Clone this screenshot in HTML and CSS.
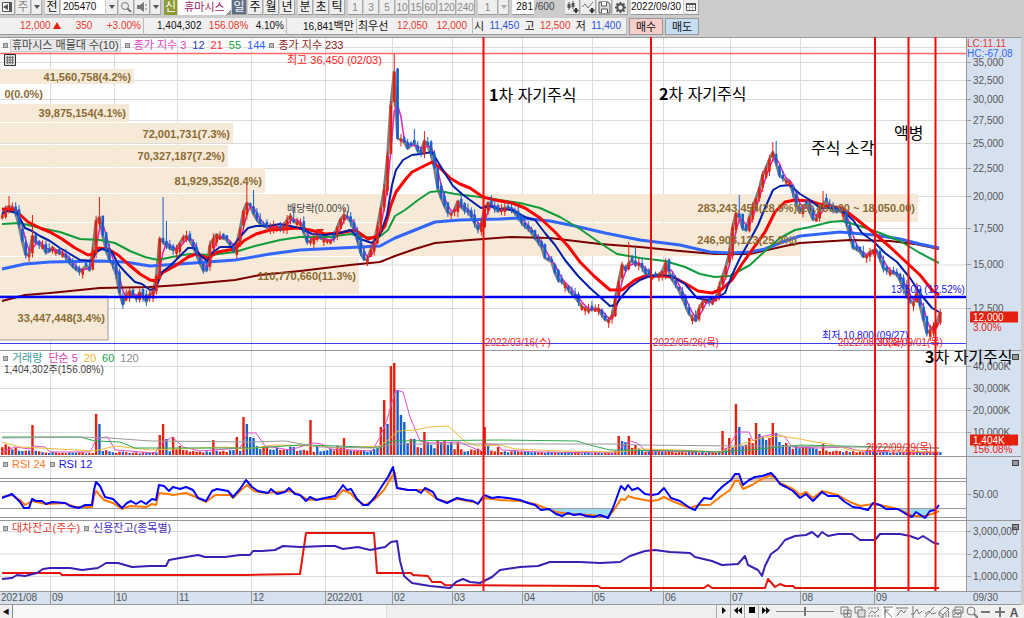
FILE: index.html
```html
<!DOCTYPE html>
<html lang="ko">
<head>
    <meta charset="UTF-8">
    <meta name="viewport" content="width=device-width, initial-scale=1">
    <title>휴마시스 205470</title>
    <link rel="stylesheet" href="styles.css">
</head>
<body>
    <div class="wrapper">
        <div class="toolbar">
            <button class="btn icon w15" aria-label="패널"><svg width="12" height="12" viewBox="0 0 12 12"><path d="M1.500 1.500h9v9h-9z" fill="#fff" stroke="#555"/><path d="M8 1h3v10H8zM2 6l5-3v6z" fill="#555"/></svg></button>
            <button class="btn w15 muted">주</button>
            <button class="btn w10 arrow gap-after" aria-label="주기 목록"></button>
            <button class="btn w15">전</button>
            <input class="code" type="text" value="205470" aria-label="종목코드">
            <button class="btn w12 arrow" aria-label="종목 목록"></button>
            <button class="btn icon w15" aria-label="검색"><svg width="12" height="12" viewBox="0 0 12 12"><circle cx="5" cy="5" r="3.5" fill="none" stroke="#777"/><path d="M7.500 7.500L11 11" stroke="#777" stroke-width="2"/></svg></button>
            <button class="btn icon w15" aria-label="소리"><svg width="12" height="12" viewBox="0 0 12 12"><path d="M1 4h3l4-3v10L4 8H1z" fill="#777"/><path d="M10 3v2M10 7v2" stroke="#777"/></svg></button>
            <button class="btn w10 arrow gap-after" aria-label="소리 설정"></button>
            <span class="credit">신</span>
            <span class="stock">휴마시스</span>
            <button class="btn w15 active">일</button>
            <button class="btn w15">주</button>
            <button class="btn w15">월</button>
            <button class="btn w15 gap-after">년</button>
            <button class="btn w15">분</button>
            <button class="btn w15">초</button>
            <button class="btn w15 gap-after">틱</button>
            <button class="btn w15 num">1</button>
            <button class="btn w15 num">3</button>
            <button class="btn w15 num">5</button>
            <button class="btn w13 num">10</button>
            <button class="btn w13 num">15</button>
            <button class="btn w13 num">60</button>
            <button class="btn w18 num">120</button>
            <button class="btn w18 num gap-after">240</button>
            <button class="btn w20 num">1</button>
            <button class="btn w10 arrow pale gap-after" aria-label="틱 목록"></button>
            <input class="count" type="text" value="281" aria-label="봉 수">
            <span class="total">/600</span>
            <button class="btn icon w15" aria-label="봉 추가"><svg width="13" height="13" viewBox="0 0 13 13"><path d="M3 1v8M7 0v8" stroke="#555"/><path d="M1.500 3h3v4h-3zM5.500 2h3v4h-3z" fill="#555"/><path d="M10 7v5M7.500 9.500h5" stroke="#333" stroke-width="2"/></svg></button>
            <button class="btn icon w15" aria-label="지표 추가"><svg width="13" height="13" viewBox="0 0 13 13"><path d="M0 6l3-3 3 4 5-6" stroke="#777" fill="none"/><path d="M10 7v5M7.500 9.500h5" stroke="#333" stroke-width="2"/></svg></button>
            <button class="btn icon w15" aria-label="저장"><svg width="13" height="13" viewBox="0 0 13 13"><path d="M1 1h9l2 2v9H1z" fill="#ddd" stroke="#555"/><path d="M3.500 1v4h5V1M3.500 12V8h6v4" fill="#fff" stroke="#555"/></svg></button>
            <button class="btn icon w15 gap-after" aria-label="설정"><svg width="13" height="13" viewBox="0 0 13 13"><circle cx="6.500" cy="6.500" r="3.200" fill="none" stroke="#555" stroke-width="2"/><path d="M6.500 1v2M6.500 10v2M1 6.500h2M10 6.500h2M2.500 2.500l1.500 1.500M9 9l1.500 1.500M2.500 10.500L4 9M9 4l1.500-1.500" stroke="#555" stroke-width="2"/></svg></button>
            <input class="date" type="text" value="2022/09/30" aria-label="기준일">
            <button class="btn icon w15" aria-label="달력"><svg width="12" height="12" viewBox="0 0 12 12"><path d="M1.500 2.500h9v7h-9z" fill="#fff" stroke="#555"/><path d="M1 2h10v2H1z" fill="#555"/><path d="M4.500 4v5M7.500 4v5M2 6.500h8" stroke="#bbb"/></svg></button>
        </div>

        <div class="quote">
            <div class="cell price"><span class="up">12,000 <i class="tri"></i></span><span class="up">350</span><span class="up">+3.00%</span></div>
            <div class="cell volume"><span>1,404,302</span><span class="up">156.08%</span><span>4.10%</span></div>
            <div class="cell amount"><span>16,841<small>백만</small></span></div>
            <div class="cell best"><small>최우선</small><span class="up">12,050</span><span class="up">12,000</span></div>
            <div class="cell ohl"><small>시</small><span class="down">11,450</span><small>고</small><span class="up">12,500</span><small>저</small><span class="down">11,400</span></div>
            <button class="trade buy">매수</button>
            <button class="trade sell">매도</button>
        </div>

        <div class="chart">
            <section class="panel panel-price" id="price">
                <div class="plot">
                    <svg class="canvas" viewBox="0 37 966 313" preserveAspectRatio="none"></svg>
                    <div class="legend">
                        <i class="dot"></i><span class="boxed">휴마시스 매물대 수(10)</span>
                        <i class="dot"></i><span class="c-magenta">종가 지수 3</span><span class="c-navy">12</span><span class="c-red">21</span><span class="c-green">55</span><span class="c-blue">144</span>
                        <i class="dot"></i><span class="c-maroon">종가 지수 233</span>
                    </div>
                    <svg class="grid-icon" width="12" height="12" viewBox="0 0 12 12"><path d="M.5.5h11v11H.5z" fill="#ddd" stroke="#333"/><path d="M3.500 2v8M6 2v8M8.500 2v8M2 3.500h8M2 6h8M2 8.500h8" stroke="#777"/></svg>
                </div>
                <div class="axis"></div>
            </section>
            <section class="panel panel-volume" id="volume">
                <div class="plot">
                    <svg class="canvas" viewBox="0 350 966 106" preserveAspectRatio="none"></svg>
                    <div class="legend">
                        <i class="dot"></i><span class="c-teal">거래량</span><span class="c-magenta">단순 5</span><span class="c-yellow">20</span><span class="c-green">60</span><span class="c-gray">120</span>
                    </div>
                    <div class="sub-legend">1,404,302주(156.08%)</div>
                </div>
                <div class="axis"><button class="close" aria-label="거래량 닫기"></button></div>
            </section>
            <section class="panel panel-rsi" id="rsi">
                <div class="plot">
                    <svg class="canvas" viewBox="0 456 966 64" preserveAspectRatio="none"></svg>
                    <div class="legend">
                        <i class="dot"></i><span class="c-orange">RSI 24</span><i class="dot"></i><span class="c-rsi">RSI 12</span>
                    </div>
                </div>
                <div class="axis"><button class="close" aria-label="RSI 닫기"></button></div>
            </section>
            <section class="panel panel-credit" id="credit">
                <div class="plot">
                    <svg class="canvas" viewBox="0 520 966 71" preserveAspectRatio="none"></svg>
                    <div class="legend">
                        <i class="dot"></i><span class="c-up">대차잔고(주수)</span><i class="dot"></i><span class="c-purple">신용잔고(종목별)</span>
                    </div>
                </div>
                <div class="axis"><button class="close" aria-label="잔고 닫기"></button></div>
            </section>
        </div>

        <div class="timeline">
            <div class="months" id="months"></div>
            <div class="last-date">09/30</div>
        </div>

        <div class="bottom">
            <button class="scroll-left" aria-label="왼쪽으로">◀</button>
            <div class="track"><div class="thumb"></div></div>
            <button class="play" aria-label="재생"><svg width="10" height="9" viewBox="0 0 10 9"><path d="M3 1l4 3.500L3 8z"/></svg></button>
            <button class="play" aria-label="뒤로"><svg width="10" height="9" viewBox="0 0 10 9"><path d="M5 1L1 4.500 5 8zM9 1L5 4.500 9 8z"/></svg></button>
            <button class="play" aria-label="정지"><svg width="10" height="9" viewBox="0 0 10 9"><path d="M2 1h6v6H2z"/></svg></button>
            <button class="play" aria-label="앞으로"><svg width="10" height="9" viewBox="0 0 10 9"><path d="M1 1l4 3.500L1 8zM5 1l4 3.500L5 8z"/></svg></button>
            <input class="speed" type="range" min="0" max="100" value="50" aria-label="속도">
            <div class="tools">
                <button aria-label="복사"><svg viewBox="0 0 12 12"><path d="M1 1h7v7H1zM4 4h7v7H4zM7.500 5v5M5 7.500h5"/></svg></button>
                <button aria-label="겹치기"><svg viewBox="0 0 12 12"><path d="M1 1h7v6H1z"/><path d="M4 4h7v7H4z" fill="#ddd"/></svg></button>
                <button aria-label="보조선"><svg viewBox="0 0 12 12"><path d="M0 2h12M0 10h12" stroke-dasharray="2 1"/><path d="M1 8l3-3 3 2 4-4"/></svg></button>
                <button class="on" aria-label="십자선"><svg viewBox="0 0 12 12"><path d="M1 1h10M3 1v11M3 4l7 7M3 4h4M3 4v4"/></svg></button>
                <button aria-label="추세"><svg viewBox="0 0 12 12"><path d="M0 2h12M1 10l4-6 3 3 2-3"/></svg></button>
                <button aria-label="수직선"><svg viewBox="0 0 12 12"><path d="M3 0v12M1 8h3l3-5 2 5 3-3"/></svg></button>
                <button aria-label="그리기"><svg viewBox="0 0 12 12"><path d="M1 11L10 1M1 8l4-3 3 3 4-1"/></svg></button>
                <button aria-label="지우개"><svg viewBox="0 0 12 12"><path d="M1 6l6-5 4 2-6 6zM1 6v3l4 3V9M8 7v4M10.500 5v6"/></svg></button>
                <button aria-label="창"><svg viewBox="0 0 12 12"><path d="M3 1h8v6H3zM1 4h8v7H1zM2 9l2-2 2 2 2-3"/></svg></button>
                <button aria-label="확대경"><svg viewBox="0 0 12 12"><circle cx="5" cy="5" r="4"/><path d="M8 8l4 4" stroke-width="2"/></svg></button>
                <button aria-label="축소"><svg viewBox="0 0 12 12"><path d="M1 6h9" stroke-width="2"/></svg></button>
                <button aria-label="확대"><svg viewBox="0 0 12 12"><path d="M1 6h10M6 1v10" stroke-width="2"/></svg></button>
                <button class="letter" aria-label="글자">A</button>
            </div>
        </div>
    </div>
    <script src="chart.js"></script>
</body>
</html>
```
FILE: styles.css
```css
html, body {
    height: 100%;
}

body {
    margin: 0;
    overflow: hidden;
    background-color: #ccc;
    color: #111;
    font-family: "Liberation Sans", "Noto Sans CJK KR", sans-serif;
    font-size: 10px;
    line-height: 14px;
}

button, input {
    box-sizing: border-box;
    margin: 0;
    padding: 0;
    border: 0;
    border-radius: 0;
    font: inherit;
    color: inherit;
}

.wrapper {
    height: 100%;
    display: flex;
    flex-direction: column;
}

/* top bars */
.toolbar {
    display: flex;
    gap: 1px;
    height: 15px;
    padding-bottom: 3px;
    white-space: nowrap;
}

.btn {
    flex-shrink: 0;
    overflow: hidden;
    background-color: #eee;
    border-right: 1px solid #aaa;
    border-bottom: 1px solid #999;
    text-align: center;
    font-size: 12px;
    line-height: 13px;
}

    .btn.icon {
        display: flex;
        align-items: center;
        justify-content: center;
    }

    .btn svg {
        flex-shrink: 0;
    }

.w10 { width: 10px; }
.w12 { width: 12px; }
.w13 { width: 13px; }
.w15 { width: 15px; }
.w18 { width: 18px; }
.w20 { width: 20px; }

.gap-after {
    margin-right: 2px;
}

.muted, .num {
    color: #888;
}

    .btn.num {
        font-size: 10px;
    }

.arrow::after {
    content: "";
    display: block;
    width: 0;
    margin: 0 auto;
    border: 3px solid transparent;
    border-top: 4px solid #555;
    border-bottom: 0;
}

    .arrow.pale::after {
        border-top-color: #aaa;
    }

.active {
    background-color: #5f6f86;
    color: #fff;
}

.code, .count, .date {
    background-color: #fff;
    border-bottom: 1px solid #999;
}

.code {
    width: 44px;
    padding-left: 2px;
}

.count {
    width: 22px;
    padding-right: 1px;
    text-align: right;
}

.total {
    width: 29px;
    color: #444;
}

.date {
    width: 52px;
}

.credit {
    width: 13px;
    background-color: #8e9a33;
    color: #fff;
    font-size: 12px;
    text-align: center;
}

.stock {
    width: 53px;
    background: linear-gradient(135deg, #fff 92%, #999 92%);
    color: #9b1b5e;
    font-size: 11px;
    text-align: center;
}

.quote {
    display: flex;
    height: 17px;
    padding-bottom: 2px;
    line-height: 16px;
    white-space: nowrap;
}

.cell {
    box-sizing: border-box;
    display: flex;
    justify-content: space-between;
    background-color: #f0f0f0;
    border-right: 1px solid #bbb;
    border-bottom: 1px solid #999;
}

    .cell small {
        font-size: 11px;
    }

.price { width: 144px; padding: 0 2px 0 20px; }
.volume { width: 143px; padding: 0 2px 0 13px; }
.amount { width: 70px; padding-left: 16px; }
.best { width: 116px; padding: 0 5px 0 1px; }
.ohl { width: 154px; padding: 0 5px 0 1px; }

.up { color: #e8392b; }
.down { color: #2a55d4; }

.tri {
    display: inline-block;
    border: 4px solid transparent;
    border-top: 0;
    border-bottom: 7px solid #e5200c;
}

.trade {
    width: 34px;
    margin-left: 2px;
    border: 1px solid #999;
    font-size: 11px;
    line-height: 14px;
}

.buy { background-color: #f6cdc9; }
.sell { background-color: #c5dcf3; }

/* chart panels */
.chart {
    flex: 1 1 0;
    min-height: 0;
    display: flex;
    flex-direction: column;
    margin-right: 3px;
    background-color: #fff;
}

.panel {
    position: relative;
    min-height: 0;
    display: flex;
}

.panel-price { flex: 313 1 0; }
.panel-volume { flex: 106 1 0; }
.panel-rsi { flex: 64 1 0; }
.panel-credit { flex: 71 1 0; }

.plot {
    position: relative;
    flex: 1 1 0;
}

.canvas {
    position: absolute;
    width: 100%;
    height: 100%;
}

.axis {
    box-sizing: border-box;
    position: relative;
    width: 55px;
    background-color: #d6e1ef;
    border-left: 1px solid #999;
    border-top: 1px solid #999;
    color: #555;
}

.legend {
    position: relative;
    display: flex;
    align-items: center;
    gap: 6px;
    height: 14px;
    padding: 1px 0 0 5px;
    font-size: 11px;
    white-space: nowrap;
}

.sub-legend {
    position: relative;
    padding-left: 4px;
    line-height: 10px;
    color: #444;
}

.dot {
    width: 3px;
    height: 3px;
    margin: 0 -2px;
    border: 1px solid #888;
    background-color: #bbb;
}

.boxed {
    margin-left: -2px;
    padding: 0 1px;
    background-color: #e8e8e8;
    border: 1px solid #ccc;
    line-height: 11px;
    color: #444;
}

.c-magenta { color: #e040c0; }
.c-navy { color: #2340b8; }
.c-red { color: #ff1c1c; }
.c-green { color: #12a140; }
.c-blue { color: #3366ff; }
.c-maroon { color: #8b1a1a; }
.c-teal { color: #3a9a9a; }
.c-yellow { color: #f0b428; }
.c-gray { color: #888; }
.c-orange { color: #ff7a1a; }
.c-rsi { color: #1414f0; }
.c-up { color: #e8392b; }
.c-purple { color: #4a2fc0; }
.c-dark { color: #444; }

.grid-icon {
    position: absolute;
    left: 4px;
    top: 17px;
}

/* labels over the plot, placed by chart.js */
.label {
    position: absolute;
    white-space: nowrap;
    line-height: 14px;
    transform: translateY(-50%);
}

    .label.profile {
        color: #8b6b33;
        font-size: 11px;
        font-weight: bold;
        transform: translate(-100%, -50%);
    }

    .label.peak {
        font-size: 11px;
    }

    .label.note {
        z-index: 2;
        color: #000;
        font-family: "Noto Sans CJK KR", sans-serif;
        font-size: 16px;
    }

    .label.tick {
        left: 6px;
    }

        .label.tick::before {
            content: "";
            position: absolute;
            left: -6px;
            top: 6px;
            width: 4px;
            border-top: 1px solid #999;
        }

    .label.badge {
        left: 3px;
        right: 3px;
        padding-left: 3px;
        line-height: 11px;
        background-color: #e5200c;
        color: #fff;
    }

    .label.rate {
        left: 6px;
        color: #e5200c;
    }

    .label.limit {
        left: 0;
    }

.close {
    position: absolute;
    right: 2px;
    top: 3px;
    width: 7px;
    height: 6px;
    background-color: #999;
    border: 1px solid #444;
}

/* shapes */
.grid { stroke: #dcdcdc; stroke-width: 1; }
.frame { stroke: #999; stroke-width: 1; }
.profile-bar { fill: #f6e9d7; }
.line { fill: none; stroke-linejoin: round; }
.event { stroke: #f50a0a; stroke-width: 2; }
.rise { fill: #e5200c; }
.fall { fill: #1560d0; }
.over { fill: #f8c8a0; }
.under { fill: #9edcf5; }

/* time axis and bottom bar */
.timeline {
    box-sizing: border-box;
    display: flex;
    height: 14px;
    margin-right: 3px;
    background-color: #d6e1ef;
    border-top: 1px solid #999;
    border-bottom: 1px solid #999;
    line-height: 12px;
    color: #555;
}

.months {
    position: relative;
    flex: 1 1 0;
}

.month {
    position: absolute;
    padding-left: 1px;
    border-left: 1px solid #999;
}

    .month:first-child {
        border-left: 0;
    }

.last-date {
    width: 48px;
    padding-left: 7px;
}

.bottom {
    display: flex;
    height: 13px;
    background-color: #f0f0f0;
}

    .bottom button {
        background-color: #f0f0f0;
    }

.scroll-left {
    width: 13px;
    border-right: 1px solid #888;
    font-size: 7px;
}

.track {
    flex: 1 1 0;
    background-color: #f8f8f8;
}

.thumb {
    height: 100%;
    margin-left: 53%;
    background-color: #efefef;
    border-left: 1px solid #ddd;
}

.bottom .play {
    width: 14px;
    border-left: 1px solid #aaa;
    line-height: 10px;
}

.bottom .speed {
    width: 58px;
    height: 13px;
    margin: 0 6px 0 4px;
    appearance: none;
    background: linear-gradient(#888, #888) 0 6px / 100% 1px no-repeat;
}

    .speed::-webkit-slider-thumb {
        appearance: none;
        width: 2px;
        height: 9px;
        background-color: #777;
    }

.tools {
    display: flex;
    gap: 2px;
    margin-right: 4px;
}

    .tools button {
        width: 12px;
        height: 13px;
        padding-top: 1px;
    }

    .tools button.on {
        background-color: #fff;
    }

    .tools svg {
        display: block;
        width: 12px;
        height: 12px;
        fill: none;
        stroke: #777;
    }

    .tools .letter {
        font: bold 12px "Liberation Sans", sans-serif;
        color: #555;
    }
```
FILE: chart.js
```js
const WIDTH = 966;
const BARS = 281;
const STEP = 3.35;
const NS = 'http://www.w3.org/2000/svg';

// "x,y x,y ..." -> [[x, y], ...]
const pts = (s) => s.trim().split(/\s+/).map((p) => p.split(',').map(Number));

function sample(points, x) {
    if (x <= points[0][0]) return points[0][1];
    for (let i = 1; i < points.length; i++) {
        const [x0, y0] = points[i - 1];
        const [x1, y1] = points[i];
        if (x <= x1) return y0 + (y1 - y0) * (x - x0) / (x1 - x0);
    }
    return points[points.length - 1][1];
}

let seed = 7;
function rnd() {
    seed = (seed * 16807) % 2147483647;
    return seed / 2147483647;
}

function add(svg, tag, attrs) {
    const el = document.createElementNS(NS, tag);
    Object.keys(attrs).forEach((k) => el.setAttribute(k, attrs[k]));
    svg.appendChild(el);
    return el;
}

const canvas = (id) => document.querySelector('#' + id + ' .canvas');
const hline = (svg, y, cls) => add(svg, 'path', { d: `M0 ${y}H${WIDTH}`, class: cls });
const line = (svg, points, color, width) =>
    add(svg, 'polyline', { points: points.join(' '), class: 'line', stroke: color, 'stroke-width': width });

function label(id, parent, x, y, text, cls) {
    const box = canvas(id).viewBox.baseVal;
    const el = document.createElement('span');
    el.className = 'label ' + cls;
    el.innerHTML = text;
    if (x !== null) el.style.left = (x / WIDTH * 100) + '%';
    el.style.top = ((y - box.y) / box.height * 100) + '%';
    document.querySelector('#' + id + ' ' + parent).appendChild(el);
}

const months = [[0, '2021/08'], [50, '09'], [114, '10'], [177, '11'], [251, '12'], [325, '2022/01'], [392, '02'],
    [452, '03'], [522, '04'], [592, '05'], [663, '06'], [730, '07'], [800, '08'], [874, '09']];
const events = [483.5, 651, 875, 908.5, 935.5];

const ticks = {
    price: [[62.5, '35,000'], [80.5, '32,500'], [99.500, '30,000'], [120.5, '27,500'], [143.5, '25,000'],
        [168.5, '22,500'], [196.5, '20,000'], [228.5, '17,500'], [265, '15,000'], [308.5, '12,500']],
    volume: [[366.5, '40,000K'], [388.5, '30,000K'], [410.5, '20,000K'], [432.5, '10,000K']],
    rsi: [[494.5, '50.00']],
    credit: [[531.5, '3,000,000'], [554, '2,000,000'], [576.5, '1,000,000']]
};

const closes = pts(`2,216 7,206 12,207 17,215 22,240 26,256 29,255 32,235 36,243 43,246 47,255 52,247 58,253 64,254
    69,262 74,268 80,272 86,266 91,272 94,235 97,215 100,218 103,237 108,258 115,268 119,290 122,307 126,295 130,291
    136,299 140,292 146,302 152,290 155,295 159,240 161,237 163,242 168,247 173,250 178,248 182,238 187,236 192,244
    197,256 202,268 206,275 210,245 216,234 222,238 228,240 233,252 238,240 242,220 245,202 250,205 254,215 260,224
    268,228 275,226 282,229 290,215 293,222 300,222 308,244 315,236 325,240 333,241 338,225 343,214 350,220 356,235
    361,254 366,263 370,252 375,240 380,213 385,185 389,140 392,85 394,66 397,138 403,140 408,149 414,142 420,156
    425,139 430,150 434,165 438,190 444,205 449,215 454,211 458,201 463,210 469,212 474,222 479,231 483,218 486,202
    492,205 497,212 503,208 510,208 517,215 523,225 530,230 536,240 541,245 545,258 552,262 557,280 563,282 570,292
    576,298 582,307 590,310 598,308 605,320 611,321 614,305 618,285 622,265 627,272 630,257 635,265 640,263 645,273
    650,277 657,276 662,272 666,262 671,278 678,288 684,302 690,316 696,321 700,305 705,300 711,303 716,298 721,280
    725,270 730,250 734,215 738,212 742,228 746,230 750,215 755,200 758,195 762,176 766,168 770,158 773,152 775,158
    779,175 785,180 790,182 795,200 800,213 806,203 811,215 815,223 820,208 826,200 830,208 836,212 842,210 847,225
    853,248 859,250 864,258 870,252 874,250 878,253 883,268 890,272 898,275 904,290 908,298 913,305 917,292 921,310
    926,330 928,337 932,325 936,328 939,312`);

// tops of the long upper wicks
const wicks = [[9, 196], [32, 215], [99, 197], [163, 197], [168, 221], [246, 184], [253, 190], [293, 208], [343, 208],
    [394, 54], [414, 129], [424, 131], [430, 140], [628, 242], [635, 248], [738, 195], [772, 142], [775, 141],
    [823, 191], [916, 283]];

const averages = [
    ['#001fa8', 2, `2,213 8,211 17,213 25,228 32,231 40,236 50,241 60,248 70,254 80,260 92,261 96,252 102,249 112,252
        118,264 126,273 135,282 142,284 150,290 156,288 162,272 170,266 180,256 188,248 194,248 200,255 207,261 212,253
        220,247 232,247 240,237 248,228 256,226 268,226 280,224 290,226 300,228 312,234 325,235 340,233 350,230 360,239
        372,243 380,235 387,215 392,185 396,170 403,160 412,155 420,154 432,152 438,162 446,175 453,186 462,194 470,200
        481,208 490,206 500,209 512,210 525,217 535,220 545,233 555,245 565,260 578,276 590,288 600,297 610,306 616,305
        622,296 630,287 640,280 650,276 662,275 672,276 685,284 697,298 707,300 716,298 725,293 732,275 740,258 750,240
        758,225 765,208 773,190 780,186 790,185 800,194 810,200 820,208 835,208 845,213 853,220 862,233 874,242 885,253
        897,262 910,278 922,296 932,308 939,312`],
    ['#ff0000', 3, `2,209 15,210 28,222 40,228 50,232 62,239 75,248 88,255 93,254 98,248 108,249 118,255 128,264 140,274
        150,280 156,281 162,273 175,266 188,257 196,254 208,258 218,252 235,249 245,240 256,234 270,230 285,229 297,228
        310,230 325,234 340,233 355,230 368,239 378,236 385,226 391,205 396,192 405,180 412,172 420,168 432,162 440,168
        450,178 460,184 470,188 483,197 495,200 512,203 525,208 540,218 555,232 568,246 580,262 595,277 610,290 622,290
        635,280 645,276 665,276 675,278 688,285 698,291 712,293 722,289 732,280 742,264 752,250 765,232 775,212 785,202
        795,200 810,201 825,206 842,208 855,218 865,226 874,233 890,247 905,261 920,275 932,290 939,295`],
    ['#119c3c', 2, `2,224 20,223 40,228 60,232 80,239 100,240 115,243 130,251 145,257 158,260 172,257 190,254 210,255
        235,252 255,246 280,240 300,237 330,237 350,234 365,237 378,238 388,230 395,216 405,210 418,200 430,192 440,191
        455,194 480,197 500,200 520,203 540,208 560,217 580,229 600,243 617,254 640,258 665,261 685,267 700,274 715,277
        730,276 750,265 765,251 780,238 795,230 810,227 830,222 842,221 860,226 880,233 900,241 920,253 939,263`],
    ['#3366ff', 3, `2,269 25,264 50,262 100,261 125,262 150,266 180,264 235,260 270,254 300,250 340,248 380,246 395,238
        415,230 435,222 460,220 500,219 520,218 550,221 575,226 605,233 640,240 680,245 710,252 730,253 750,252 765,249
        785,241 800,236 840,232 874,235 900,239 920,244 939,248`],
    ['#7b0000', 2, `2,301 25,295 50,293 100,288 150,287 180,285 235,280 260,275 300,271 350,265 380,262 395,256 415,249
        435,243 470,240 510,237 550,238 600,244 640,247 680,251 715,254 750,254 785,246 800,243 850,240 890,241 915,244
        939,249`]
];

// top, height, width of each price band and its text
const profile = [
    [69, 15, 134, '41,560,758(4.2%)', 76.5], [88, 12, 0, '0(0.0%)', 94], [104, 18, 129, '39,875,154(4.1%)', 112.5],
    [123, 20, 233, '72,001,731(7.3%)', 133.5], [145, 22, 228, '70,327,187(7.2%)', 156],
    [168, 25, 265, '81,929,352(8.4%)', 180.5], [194, 28, 918, '283,243,454(28.9%)(20,450.00 ~ 18,050.00)', 208],
    [223, 33, 800, '246,903,123(25.2%)', 239.5], [257, 37, 359, '110,770,660(11.3%)', 275.5],
    [296, 44, 108, '33,447,448(3.4%)', 317.5]
];

const volumeBase = pts(`2,7 5,11 12,8 20,5 40,3 90,2 104,5 115,3 150,2 170,5 200,3 230,4 260,7 270,5 290,7 305,4 320,3
    340,8 350,4 370,3 380,8 410,14 425,8 445,10 465,4 480,5 500,4 530,3 600,2 612,3 635,6 650,3 715,3 740,10 750,12
    790,8 800,7 830,4 860,3 939,3`);
// negative height = falling bar
const volumeSpikes = pts(`32,30 96,41 99,-31 159,20 163,31 166,-16 173,18 179,9 213,15 236,18 243,38 246,-31 249,-18
    253,-17 256,-9 268,9 310,35 316,-9 343,17 380,28 383,55 387,-31 390,89 394,92 397,-65 400,-40 404,-33 407,-12 410,16
    414,-16 424,23 427,-13 430,-10 437,15 440,-13 444,15 447,-10 451,-13 457,13 484,28 487,-9 497,8 618,19 621,-14
    625,-13 628,19 634,10 722,24 725,-7 729,17 732,-8 735,51 738,-28 741,-9 748,17 755,32 758,-21 762,-18 765,-15 768,17
    772,32 775,-22 779,-13 782,-10 785,12 788,-9 796,-8 805,8 822,11`);
const volumeAverages = [
    ['#e050c8', `2,452 15,447 30,449 33,446 45,447 50,452 90,452 97,438 108,437 115,450 155,453 160,445 172,437 183,447
        200,451 240,448 248,433 256,433 265,446 290,450 313,443 322,444 330,449 372,451 380,437 387,420 391,405 396,390
        403,392 410,417 420,441 430,443 460,442 480,451 487,444 498,445 502,450 540,452 615,453 622,447 630,441 637,443
        646,451 720,452 729,447 737,432 749,432 753,441 760,437 775,434 785,437 792,447 820,448 845,447 860,451 939,453`],
    ['#efb93a', `2,442 20,447 40,448 95,451 115,446 150,450 225,447 245,449 275,445 320,446 335,448 380,446 388,440
        398,431 415,430 430,427 448,426 455,432 465,442 478,446 500,445 515,449 560,451 620,452 640,449 680,450 720,452
        745,443 765,437 780,436 800,439 815,442 830,444 850,450 939,452`],
    ['#30a850', `2,437 80,437 95,441 120,442 135,448 255,448 300,445 340,446 380,448 392,441 500,440 577,441 590,445
        610,450 690,451 720,452 760,449 800,445 840,446 939,448`],
    ['#999', '2,438 80,437 110,438 150,441 250,442 285,441 320,447 370,448 395,444 610,444 640,445 740,446 850,447 939,448']
];

const rsi12 = pts(`2,498 12,494 20,502 24,508 29,508 32,499 36,501 42,501 46,504 52,502 65,503 70,506 79,508 85,505
    92,505 94,490 96,482 100,486 105,497 113,499 119,505 122,508 127,503 131,501 136,504 141,501 146,504 152,499 156,500
    159,485 164,486 169,491 173,487 180,489 186,487 193,490 198,498 206,501 212,491 217,489 228,491 233,497 240,489
    246,480 252,487 258,491 268,493 271,489 277,494 285,492 289,488 295,494 300,495 306,501 310,497 316,500 325,498
    335,496 341,488 343,485 347,490 351,489 357,499 363,505 368,505 375,497 382,486 388,477 393,467 397,488 408,490
    416,490 421,493 425,488 433,492 437,499 447,503 457,498 466,500 473,501 478,504 484,495 492,498 498,497 508,498
    520,500 528,503 535,505 541,510 549,509 556,514 562,516 568,513 574,515 580,514 586,516 594,517 600,515 608,518
    613,508 618,494 621,486 625,490 628,485 632,490 638,488 645,494 652,495 658,494 664,488 671,498 680,501 690,508
    695,510 699,504 704,498 711,499 716,493 722,487 727,483 731,480 735,474 739,474 743,485 749,480 755,477 762,476
    771,473 775,477 780,484 786,487 793,491 800,498 806,494 813,501 822,492 828,496 838,496 845,502 853,507 860,508
    868,510 873,503 880,505 886,509 898,509 906,514 912,517 916,512 925,518 930,511 935,510 939,505`);
const rsi24 = pts(`2,497 12,495 20,500 25,505 32,501 46,504 65,503 75,507 92,507 94,496 96,491 104,500 113,503 122,509
    130,506 146,507 152,504 156,505 159,493 168,494 173,495 186,493 198,498 206,502 215,495 230,495 233,498 240,491
    247,485 254,491 265,493 290,491 300,495 308,500 325,499 335,499 343,490 350,493 357,500 365,505 374,500 384,490
    391,478 395,473 397,488 408,490 425,490 437,499 447,502 457,499 478,503 484,498 500,500 520,501 535,504 545,508
    556,512 570,514 590,515 608,517 614,510 621,499 625,500 628,496 634,498 650,501 658,500 664,497 672,501 690,508
    699,505 710,505 720,497 730,490 735,481 739,481 743,489 752,485 760,480 770,475 775,478 780,483 793,489 800,495
    806,492 813,498 822,491 838,495 850,502 860,506 873,504 880,505 898,509 912,516 925,516 932,514 939,511`);

const lending = pts(`2,573 60,573 62,575 245,575 300,574 306,533 374,533 377,573 411,573 413,575 428,576 432,582
    441,582 445,585 598,586 601,588 704,588 708,585 712,588 765,588 768,579 775,587 780,584 785,586 793,586 795,588
    939,588`);
const credit = pts(`2,579 12,578 17,575 25,576 37,573 43,569 50,568 70,568 82,570 98,568 106,563 118,563 132,567
    150,566 166,566 169,560 180,558 198,555 205,557 225,557 240,555 250,555 253,551 262,551 275,550 283,546 300,547
    325,546 335,546 343,549 358,547 370,550 385,547 391,542 397,541 400,561 404,576 412,583 430,586 450,588 456,582
    463,579 470,582 480,583 492,577 500,570 520,567 538,566 550,562 580,562 600,563 620,562 630,556 645,551 655,550
    670,552 690,553 695,557 712,561 722,565 738,564 745,556 748,565 758,570 762,576 765,566 771,554 778,549 785,540
    795,536 806,535 812,532 818,537 822,532 828,536 838,534 852,534 860,540 875,540 880,534 900,534 910,536 918,539
    923,536 934,543 939,544`);

function drawGrid(id) {
    const svg = canvas(id);
    const box = svg.viewBox.baseVal;
    months.slice(1).forEach(([x]) => add(svg, 'path', { d: `M${x + 0.5} ${box.y}v${box.height}`, class: 'grid' }));
    ticks[id].forEach(([y, text]) => {
        hline(svg, y, 'grid');
        label(id, '.axis', null, y, text, 'tick');
    });
    hline(svg, box.y + 0.5, 'frame');
}

function drawEvents(id) {
    const svg = canvas(id);
    const box = svg.viewBox.baseVal;
    events.forEach((x) => add(svg, 'path', { d: `M${x} ${box.y}v${box.height}`, class: 'event' }));
}

function drawPrice() {
    const svg = canvas('price');
    hline(svg, 47.5, 'grid');
    profile.forEach(([y, h, w]) => add(svg, 'rect', { x: 0, y, width: w, height: h, class: 'profile-bar' }));
    add(svg, 'path', { d: 'M0 296H108V340H0', class: 'line', stroke: '#999' });
    line(svg, [[0, 53.5], [WIDTH, 53.5]], '#ff6a6a', 1.5);
    line(svg, [[0, 343.5], [WIDTH, 343.5]], '#3c3cf0', 1);

    const bars = [];
    for (let i = 0; i < BARS; i++) {
        const x = 2.3 + i * STEP;
        bars.push([x, sample(closes, x)]);
    }
    line(svg, bars, '#808080', 3);
    line(svg, bars.map(([x, y], i) => [x, i > 1 ? (y + bars[i - 1][1] + bars[i - 2][1]) / 3 : y]), '#e020b8', 1.5);
    averages.slice().reverse().forEach(([color, width, s]) => line(svg, pts(s), color, width));

    bars.forEach(([x, y], i) => {
        const prev = i ? bars[i - 1][1] : y + 5;
        let open = prev + (rnd() - 0.5) * 8;
        if (Math.abs(open - y) < 2) open = y + (rnd() > 0.5 ? 3 : -3);
        const top = Math.min(open, y);
        const bottom = Math.max(open, y);
        const cls = y < open ? 'rise' : 'fall';
        let high = top - rnd() * 6;
        wicks.forEach(([wx, wy]) => {
            if (Math.abs(wx - x) < STEP / 2) high = wy;
        });
        const low = bottom + rnd() * 5;
        add(svg, 'rect', { x: x - 0.5, y: high, width: 1, height: low - high, class: cls });
        add(svg, 'rect', { x: x - 1.3, y: top, width: 2.6, height: bottom - top, class: cls });
    });
    line(svg, [[0, 297], [WIDTH, 297]], '#0000f5', 2.5);
    add(svg, 'path', { d: 'M316 229h8l-4 6z', class: 'rise' });

    profile.forEach(([, , w, text, y]) => label('price', '.plot', w ? w - 3 : 43, y, text, 'profile'));
    label('price', '.plot', 287, 60, '최고 36,450 (02/03)', 'peak c-red');
    label('price', '.plot', 287, 209, '배당락(0.00%)', 'c-dark');
    label('price', '.plot', 822, 336, '최저 10,800 (09/27)', 'c-rsi');
    label('price', '.plot', 891, 290, '13,500 (12.52%)', 'c-rsi');
    label('price', '.plot', 485, 343, '2022/03/16(수)', 'c-red');
    label('price', '.plot', 653, 343, '2022/05/26(목)', 'c-red');
    label('price', '.plot', 838, 343, '2022/08/30(화)', 'c-red');
    label('price', '.plot', 877, 343, '2022/09/01(목)', 'c-red');
    label('price', '.plot', 489, 94, '<b>1</b>차 자기주식', 'note');
    label('price', '.plot', 659, 93, '<b>2</b>차 자기주식', 'note');
    label('price', '.plot', 811, 147, '주식 소각', 'note');
    label('price', '.plot', 894, 132, '액병', 'note');
    label('volume', '.plot', 925, 356, '<b>3</b>차 자기주식', 'note');
    label('price', '.axis', null, 43, 'LC:11.11', 'limit c-up');
    label('price', '.axis', null, 53, 'HC:-67.08', 'limit c-blue');
    label('price', '.axis', null, 317, '12,000', 'badge');
    label('price', '.axis', null, 328, '3.00%', 'rate');
}

function drawVolume() {
    const svg = canvas('volume');
    for (let i = 0; i < BARS; i++) {
        const x = 2.3 + i * STEP;
        const spike = volumeSpikes.find(([sx]) => Math.abs(sx - x) <= STEP / 2);
        const h = spike ? Math.abs(spike[1]) : sample(volumeBase, x) * (0.7 + rnd() * 0.6);
        const rise = spike ? spike[1] > 0 : rnd() > 0.5;
        add(svg, 'rect', { x: x - 1.2, y: 455 - h, width: 2.4, height: h, class: rise ? 'rise' : 'fall' });
    }
    volumeAverages.forEach(([color, s]) => line(svg, pts(s), color, 1));
    label('volume', '.plot', 866, 448, '2022/09/29(목)', 'c-red');
    label('volume', '.axis', null, 439.5, '1,404K', 'badge');
    label('volume', '.axis', null, 449.5, '156.08%', 'rate');
}

function drawRsi() {
    const svg = canvas('rsi');
    add(svg, 'clipPath', { id: 'above' }).innerHTML = '<rect x="0" y="456" width="966" height="25"/>';
    add(svg, 'clipPath', { id: 'below' }).innerHTML = '<rect x="0" y="508" width="966" height="12"/>';
    add(svg, 'polygon', { points: `2,481 ${rsi12.join(' ')} 939,481`, class: 'over', 'clip-path': 'url(#above)' });
    add(svg, 'polygon', { points: `2,508 ${rsi12.join(' ')} 939,508`, class: 'under', 'clip-path': 'url(#below)' });
    [478.5, 481.5, 508.5, 517.5].forEach((y) => hline(svg, y, 'frame'));
    line(svg, rsi24, '#ff7800', 2);
    line(svg, rsi12, '#0000ff', 2);
}

function drawCredit() {
    const svg = canvas('credit');
    line(svg, lending, '#e5140a', 2);
    line(svg, credit, '#3c1eb4', 2);
}

const draw = { price: drawPrice, volume: drawVolume, rsi: drawRsi, credit: drawCredit };
Object.keys(draw).forEach((id) => {
    drawGrid(id);
    draw[id]();
    drawEvents(id);
});

months.forEach(([x, text]) => {
    const el = document.createElement('span');
    el.className = 'month';
    el.textContent = text;
    el.style.left = (x / WIDTH * 100) + '%';
    document.querySelector('#months').appendChild(el);
});
```
